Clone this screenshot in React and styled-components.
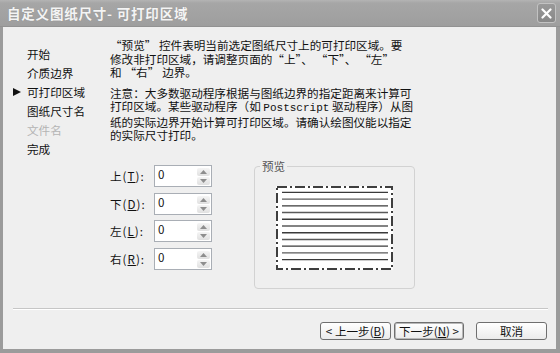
import React from 'react';
import styled, {createGlobalStyle} from 'styled-components';

const GlobalStyle = createGlobalStyle`
  html, body {
    margin: 0;
    padding: 0;
    background: #9b9b9b;
  }
  body {
    font-family: "Noto Sans CJK SC", "Liberation Sans", sans-serif;
  }
`;

const Window = styled.div`
  width: 560px;
  height: 353px;
  display: flex;
  flex-direction: column;
  background: #9b9b9b;
`;

const TitleBar = styled.div`
  height: 27px;
  flex-shrink: 0;
  display: flex;
  align-items: center;
  justify-content: space-between;
  padding: 0 4px 0 7px;
  background: linear-gradient(#b4b4b4 0, #a6a6a6 3px, #9e9e9e 100%);
  border-bottom: 1px solid #929292;
  box-sizing: border-box;
`;

const Title = styled.span`
  color: #f4f4f4;
  font-size: 13.5px;
  font-weight: bold;
  letter-spacing: 0.8px;
  text-shadow: 0 0 1px rgba(0, 0, 0, 0.15);
`;

const CloseButton = styled.div`
  width: 19px;
  height: 20px;
  box-sizing: border-box;
  border: 1px solid #c2c2c2;
  border-radius: 3px;
  background: linear-gradient(#999 0, #888 100%);
  display: flex;
  align-items: center;
  justify-content: center;
`;

const Frame = styled.div`
  flex: 1;
  display: flex;
  padding: 0 4px 4px 3px;
`;

const Body = styled.div`
  flex: 1;
  display: flex;
  flex-direction: column;
  background: #efefef;
  font-size: 11.6px;
  color: #111;
`;

const Content = styled.div`
  height: 281px;
  display: flex;
  padding-top: 12px;
  box-sizing: border-box;
`;

const Nav = styled.ul`
  width: 107px;
  flex-shrink: 0;
  list-style: none;
  margin: 0;
  padding: 5.5px 0 0 10px;
  box-sizing: border-box;
`;

const NavItem = styled.li`
  display: flex;
  align-items: center;
  height: 19px;
  line-height: 19px;
  color: ${props => (props.disabled ? '#b4b4b4' : '#111')};
  white-space: nowrap;
`;

const Marker = styled.span`
  width: 14px;
  height: 19px;
  display: flex;
  align-items: center;

  &::before {
    content: '';
    display: ${props => (props.active ? 'block' : 'none')};
    width: 0;
    height: 0;
    border-top: 4px solid transparent;
    border-bottom: 4px solid transparent;
    border-left: 8px solid #111;
  }
`;

const Main = styled.div`
  flex: 1;
  display: flex;
  flex-direction: column;
`;

const Para = styled.p`
  margin: 0 0 ${props => props.gap || 0}px 0;
  line-height: 13.5px;
  white-space: nowrap;
`;

const Mono = styled.span`
  font-family: "Liberation Mono", monospace;
  font-size: 11px;
`;

const Settings = styled.div`
  display: flex;
  align-items: flex-start;
  margin-top: 22.5px;
`;

const SpinList = styled.div`
  width: 102px;
  display: flex;
  flex-direction: column;
  gap: 5.7px;
`;

const SpinRow = styled.div`
  display: flex;
  align-items: center;
`;

const SpinLabel = styled.span`
  width: 44px;
  white-space: nowrap;
  letter-spacing: 1px;
`;

const SpinBox = styled.div`
  width: 58px;
  height: 22px;
  box-sizing: border-box;
  border: 1px solid #a9aeb5;
  background: #fff;
  display: flex;
`;

const SpinValue = styled.span`
  flex: 1;
  padding: 1px 0 0 3px;
  line-height: 15px;
`;

const SpinButtons = styled.div`
  width: 13px;
  margin: 2px 1px 1px 0;
  display: flex;
  flex-direction: column;
  gap: 1px;
`;

const SpinButton = styled.div`
  flex: 1;
  border-radius: 2px;
  background: linear-gradient(#f5f5f5, #e0e0e0);
  display: flex;
  align-items: center;
  justify-content: center;
`;

const Group = styled.div`
  position: relative;
  margin: 1px 0 0 42px;
  width: 161px;
  height: 123px;
  box-sizing: border-box;
  border: 1px solid #d2d2d2;
  border-radius: 4px;
  display: flex;
  align-items: center;
  justify-content: center;
`;

const GroupLabel = styled.span`
  position: absolute;
  top: -8px;
  left: 5px;
  padding: 0 2px;
  background: #efefef;
  color: #555;
  line-height: 14px;
`;

const Separator = styled.div`
  margin: 0 8px 0 10px;
  border-top: 1px solid #c6c6c6;
  border-bottom: 1px solid #fff;
`;

const Footer = styled.div`
  display: flex;
  justify-content: flex-end;
  padding: 12px 9px 9px;
`;

const Button = styled.button`
  width: ${props => props.width}px;
  height: 18px;
  margin-left: ${props => props.gap || 0}px;
  padding: 0;
  box-sizing: border-box;
  border: 1px solid #6f6f6f;
  border-radius: 3px;
  background: linear-gradient(#ffffff, #ebebeb);
  box-shadow: ${props => (props.primary ? 'inset 0 0 0 1px #b8b8b8' : 'none')};
  font-family: inherit;
  font-size: 11.6px;
  line-height: 16px;
  color: #111;
  white-space: nowrap;
`;

const ArrowUp = () => (
  <svg width="7" height="4" viewBox="0 0 7 4">
    <path d="M0 4 L3.5 0 L7 4 Z" fill="#8e8e8e" />
  </svg>
);

const ArrowDown = () => (
  <svg width="7" height="4" viewBox="0 0 7 4">
    <path d="M0 0 L3.5 4 L7 0 Z" fill="#8e8e8e" />
  </svg>
);

const PagePreview = () => {
  const lines = Array.from({length: 11}, (_, i) => 6.3 + i * 6.74);
  return (
    <svg width="117" height="84" viewBox="0 0 117 84">
      <rect x="0" y="0" width="117" height="84" fill="#fff" />
      <rect
        x="1"
        y="1"
        width="115"
        height="82"
        fill="none"
        stroke="#3e3e3e"
        strokeWidth="2"
        strokeDasharray="10 3 2 3"
      />
      {lines.map((y, i) => (
        <line
          key={i}
          x1="6"
          x2="112"
          y1={y}
          y2={y}
          stroke={i % 2 ? '#5a5a5a' : '#3a3a3a'}
          strokeWidth="1.3"
        />
      ))}
    </svg>
  );
};

const steps = [
  {label: '开始'},
  {label: '介质边界'},
  {label: '可打印区域', active: true},
  {label: '图纸尺寸名'},
  {label: '文件名', disabled: true},
  {label: '完成'},
];

const margins = [
  {name: '上', key: 'T'},
  {name: '下', key: 'D'},
  {name: '左', key: 'L'},
  {name: '右', key: 'R'},
];

const App = () => {
  return (
    <>
      <GlobalStyle />
      <Window>
        <TitleBar>
          <Title>自定义图纸尺寸- 可打印区域</Title>
          <CloseButton>
            <svg width="11" height="11" viewBox="0 0 11 11">
              <path d="M1.5 1.5 L9.5 9.5 M9.5 1.5 L1.5 9.5" stroke="#fff" strokeWidth="2.2" strokeLinecap="round" />
            </svg>
          </CloseButton>
        </TitleBar>
        <Frame>
          <Body>
            <Content>
              <Nav>
                {steps.map(step => (
                  <NavItem key={step.label} disabled={step.disabled}>
                    <Marker active={step.active} />
                    {step.label}
                  </NavItem>
                ))}
              </Nav>
              <Main>
                <Para gap={7}>
                  “预览” 控件表明当前选定图纸尺寸上的可打印区域。要
                  <br />
                  {'修改非打印区域，请调整页面的“上”、\u2005“下”、\u2005“左”'}
                  <br />
                  {'和\u2005“右”\u2005边界。'}
                </Para>
                <Para>
                  注意：大多数驱动程序根据与图纸边界的指定距离来计算可
                  <br />
                  打印区域。某些驱动程序（如 <Mono>Postscript</Mono> 驱动程序）从图
                  <br />
                  纸的实际边界开始计算可打印区域。请确认绘图仪能以指定
                  <br />
                  的实际尺寸打印。
                </Para>
                <Settings>
                  <SpinList>
                    {margins.map(m => (
                      <SpinRow key={m.key}>
                        <SpinLabel>
                          {m.name}(<u>{m.key}</u>):
                        </SpinLabel>
                        <SpinBox>
                          <SpinValue>0</SpinValue>
                          <SpinButtons>
                            <SpinButton>
                              <ArrowUp />
                            </SpinButton>
                            <SpinButton>
                              <ArrowDown />
                            </SpinButton>
                          </SpinButtons>
                        </SpinBox>
                      </SpinRow>
                    ))}
                  </SpinList>
                  <Group>
                    <GroupLabel>预览</GroupLabel>
                    <PagePreview />
                  </Group>
                </Settings>
              </Main>
            </Content>
            <Separator />
            <Footer>
              <Button width={71}>
                &lt; 上一步(<u>B</u>)
              </Button>
              <Button width={70} gap={3} primary>
                下一步(<u>N</u>) &gt;
              </Button>
              <Button width={71} gap={12}>
                取消
              </Button>
            </Footer>
          </Body>
        </Frame>
      </Window>
    </>
  );
};

export default App;
